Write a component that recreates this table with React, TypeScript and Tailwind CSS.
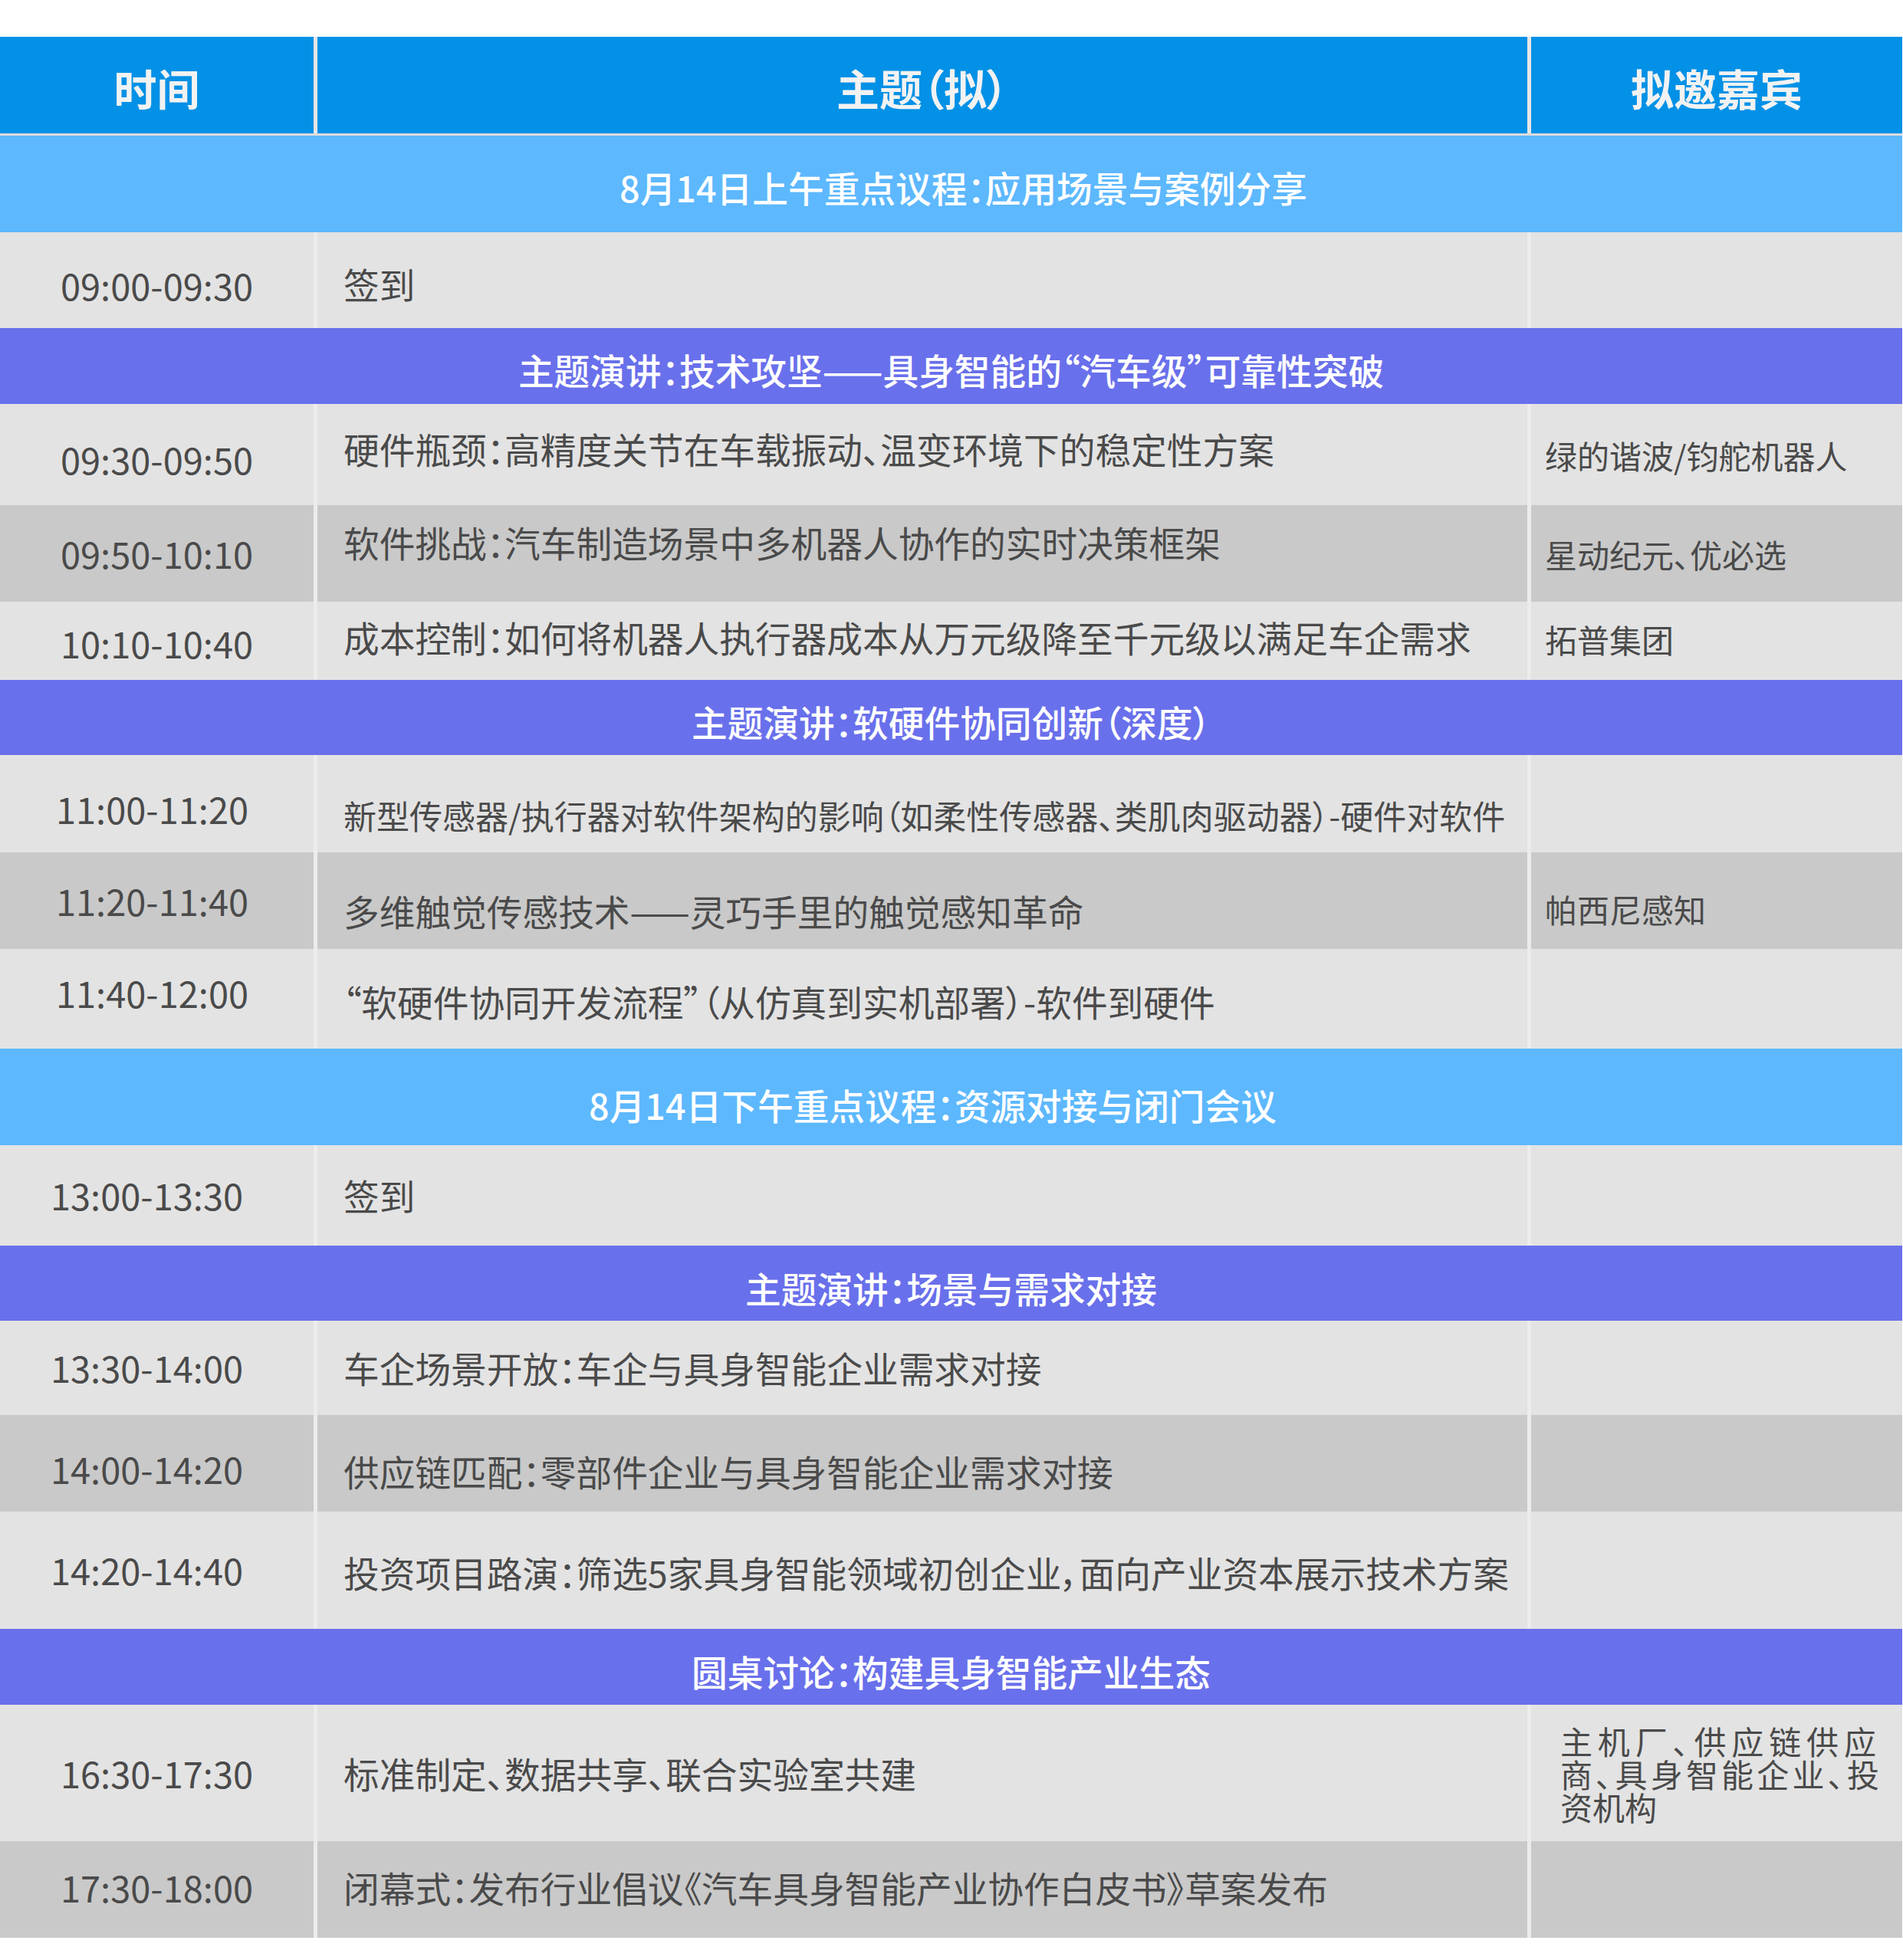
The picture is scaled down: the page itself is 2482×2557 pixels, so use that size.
import React from "react";

type Line =
  | { kind: "sec"; text: string; h: string; bg: string; pad?: string }
  | {
      kind: "row";
      time: string;
      topic: string;
      guest?: string;
      h: string;
      dark?: boolean;
      timeCls?: string;
      topicCls?: string;
      topicSize?: string;
      guestCls?: string;
    };

const font = { fontFamily: '"Noto Sans CJK SC", "Noto Sans", sans-serif' };

const rows: Line[] = [
  { kind: "sec", text: "8月14日上午重点议程：应用场景与案例分享", h: "h-[126px]", bg: "bg-[#5db8fe]", pad: "pt-[8px] pl-[32px]" },
  { kind: "row", time: "09:00-09:30", topic: "签到", h: "h-[125px]", timeCls: "pt-[13px]", topicCls: "pt-[10px]" },
  { kind: "sec", text: "主题演讲：技术攻坚——具身智能的“汽车级”可靠性突破", h: "h-[99px]", bg: "bg-[#6970eb]", pad: "pt-[10px]" },
  {
    kind: "row",
    time: "09:30-09:50",
    topic: "硬件瓶颈：高精度关节在车载振动、温变环境下的稳定性方案",
    guest: "绿的谐波/钧舵机器人",
    h: "h-[132px]",
    timeCls: "pt-[13px]",
    topicCls: "pb-[16px]",
  },
  {
    kind: "row",
    time: "09:50-10:10",
    topic: "软件挑战：汽车制造场景中多机器人协作的实时决策框架",
    guest: "星动纪元、优必选",
    h: "h-[126px]",
    dark: true,
    topicCls: "pb-[30px]",
  },
  {
    kind: "row",
    time: "10:10-10:40",
    topic: "成本控制：如何将机器人执行器成本从万元级降至千元级以满足车企需求",
    guest: "拓普集团",
    h: "h-[102px]",
    timeCls: "pt-[6px]",
    topicCls: "pb-[10px]",
    guestCls: "pb-[6px]",
  },
  { kind: "sec", text: "主题演讲：软硬件协同创新（深度）", h: "h-[98px]", bg: "bg-[#6970eb]", pad: "pt-[10px]" },
  {
    kind: "row",
    time: "11:00-11:20",
    topic: "新型传感器/执行器对软件架构的影响（如柔性传感器、类肌肉驱动器）-硬件对软件",
    h: "h-[127px]",
    timeCls: "pr-[12px] pt-[13px]",
    topicCls: "pt-[30px]",
    topicSize: "text-[43px]",
  },
  {
    kind: "row",
    time: "11:20-11:40",
    topic: "多维触觉传感技术——灵巧手里的触觉感知革命",
    guest: "帕西尼感知",
    h: "h-[126px]",
    dark: true,
    timeCls: "pr-[12px]",
    topicCls: "pt-[26px]",
    guestCls: "pt-[20px]",
  },
  {
    kind: "row",
    time: "11:40-12:00",
    topic: "“软硬件协同开发流程”（从仿真到实机部署）-软件到硬件",
    h: "h-[130px]",
    timeCls: "pr-[12px] pb-[16px]",
    topicCls: "pt-[6px]",
  },
  { kind: "sec", text: "8月14日下午重点议程：资源对接与闭门会议", h: "h-[126px]", bg: "bg-[#5db8fe]", pad: "pt-[20px] pr-[48px]" },
  { kind: "row", time: "13:00-13:30", topic: "签到", h: "h-[131px]", timeCls: "pr-[26px]" },
  { kind: "sec", text: "主题演讲：场景与需求对接", h: "h-[98px]", bg: "bg-[#6970eb]", pad: "pt-[12px]" },
  {
    kind: "row",
    time: "13:30-14:00",
    topic: "车企场景开放：车企与具身智能企业需求对接",
    h: "h-[123px]",
    timeCls: "pr-[26px]",
  },
  {
    kind: "row",
    time: "14:00-14:20",
    topic: "供应链匹配：零部件企业与具身智能企业需求对接",
    h: "h-[126px]",
    dark: true,
    timeCls: "pr-[26px] pt-[14px]",
    topicCls: "pt-[20px]",
  },
  {
    kind: "row",
    time: "14:20-14:40",
    topic: "投资项目路演：筛选5家具身智能领域初创企业，面向产业资本展示技术方案",
    h: "h-[153px]",
    timeCls: "pr-[26px]",
    topicCls: "pt-[6px]",
  },
  { kind: "sec", text: "圆桌讨论：构建具身智能产业生态", h: "h-[99px]", bg: "bg-[#6970eb]", pad: "pt-[12px]" },
  {
    kind: "row",
    time: "16:30-17:30",
    topic: "标准制定、数据共享、联合实验室共建",
    guest: "__multi__",
    h: "h-[178px]",
  },
  {
    kind: "row",
    time: "17:30-18:00",
    topic: "闭幕式：发布行业倡议《汽车具身智能产业协作白皮书》草案发布",
    h: "h-[126px]",
    dark: true,
    timeCls: "pb-[6px]",
    topicCls: "pb-[6px]",
  },
];

const Divider = ({ cls = "bg-[#ececec]" }: { cls?: string }) => (
  <div className={`w-[5px] shrink-0 self-stretch ${cls}`} />
);

const GuestMulti = () => (
  <div className="w-[416px] text-[42px] leading-[43px] text-[#4a4a4a] whitespace-nowrap">
    <div className="text-justify [text-align-last:justify] tracking-[4px]">主机厂、供应链供应</div>
    <div className="text-justify [text-align-last:justify]">商、具身智能企业、投</div>
    <div>资机构</div>
  </div>
);

export default function App() {
  return (
    <div
      className="w-[2482px] h-[2557px] bg-white pt-[48px] [font-feature-settings:'palt']"
      style={font}
    >
      <div className="w-[2481px] flex flex-col">
        {/* header */}
        <div className="flex h-[126px] bg-[#0291e6] text-[#f2f2f2] text-[56px] font-bold">
          <div className="w-[409px] flex items-center justify-center pt-[6px]">时间</div>
          <Divider cls="bg-[#e6e6e6]" />
          <div className="flex-1 flex items-center justify-center pt-[6px]">主题（拟）</div>
          <Divider cls="bg-[#e6e6e6]" />
          <div className="w-[484px] flex items-center justify-center pt-[6px]">拟邀嘉宾</div>
        </div>
        <div className="h-[3px] bg-[#dcdcdc]" />

        {rows.map((r, i) =>
          r.kind === "sec" ? (
            <div
              key={i}
              className={`${r.h} ${r.bg} ${r.pad ?? ""} flex items-center justify-center text-white text-[46.7px] font-medium`}
            >
              {r.text}
            </div>
          ) : (
            <div
              key={i}
              className={`${r.h} flex text-[#4a4a4a] ${r.dark ? "bg-[#c9c9c9]" : "bg-[#e3e3e3]"}`}
            >
              <div className={`w-[409px] shrink-0 flex items-center justify-center text-[47px] ${r.timeCls ?? ""}`}>
                {r.time}
              </div>
              <Divider />
              <div
                className={`w-[1578px] shrink-0 overflow-hidden flex items-center pl-[34px] whitespace-nowrap ${
                  r.topicSize ?? "text-[46.7px]"
                } ${r.topicCls ?? ""}`}
              >
                {r.topic}
              </div>
              <Divider />
              <div className={`w-[484px] shrink-0 flex items-center text-[42px] pl-[18px] ${r.guestCls ?? ""}`}>
                {r.guest === "__multi__" ? (
                  <div className="pl-[20px]">
                    <GuestMulti />
                  </div>
                ) : (
                  r.guest
                )}
              </div>
            </div>
          )
        )}
      </div>
    </div>
  );
}
